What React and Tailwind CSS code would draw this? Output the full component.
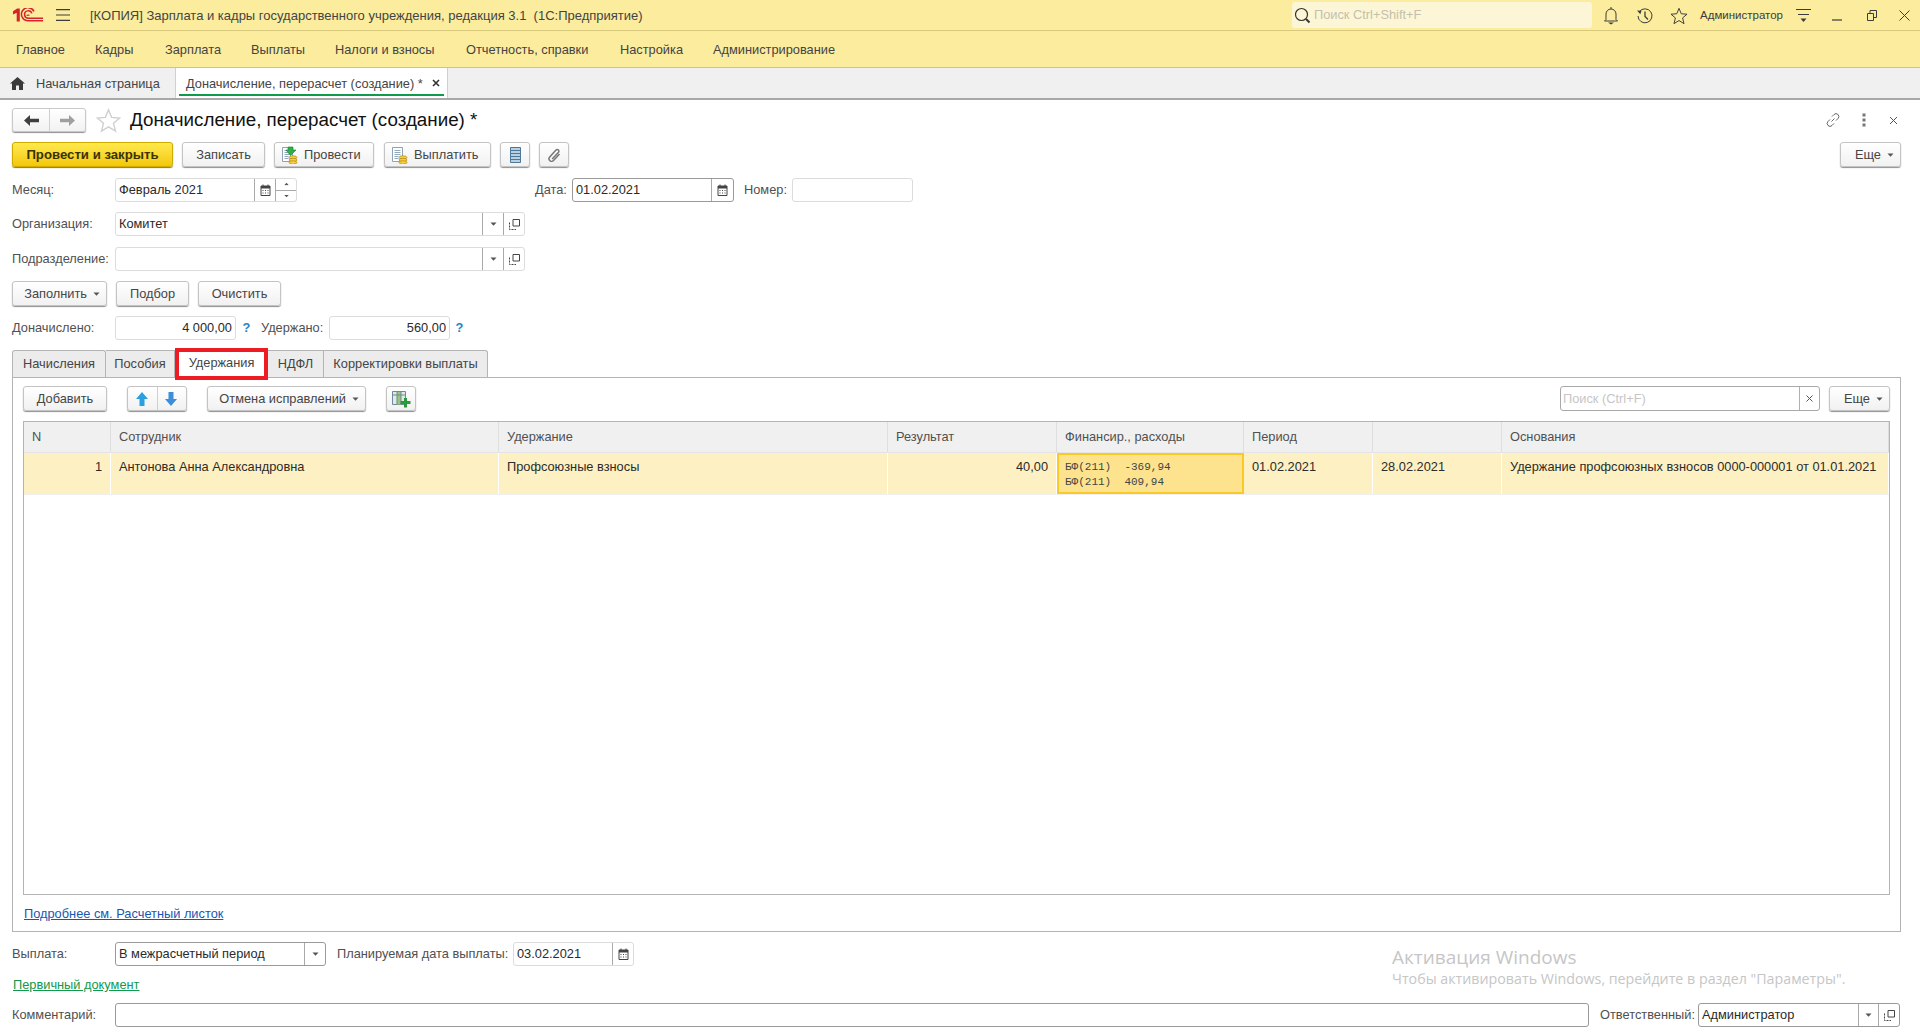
import React from "react";

const Caret = ({ className = "" }) => (
  <svg width="7" height="4" viewBox="0 0 7 4" className={className}><path d="M0.5 0.5h6L3.5 3.8z" fill="#555" /></svg>
);
const Calendar = () => (
  <svg width="11" height="12" viewBox="0 0 11 12">
    <path d="M1 2h9v9.500H1z" fill="none" stroke="#444" />
    <path d="M1 2h9v2.500H1z" fill="#444" />
    <path d="M3 .5v2M8 .5v2" stroke="#444" />
    <path d="M2.500 6h1v1h-1zM5 6h1v1H5zM7.500 6h1v1h-1zM2.500 8.500h1v1h-1zM5 8.500h1v1H5zM7.500 8.500h1v1h-1z" fill="#444" />
  </svg>
);
const OpenIcon = () => (
  <svg width="11" height="11" viewBox="0 0 11 11">
    <path d="M4 .5h6.500V7H4z" fill="none" stroke="#444" />
    <path d="M.5 3.500v7H7" fill="none" stroke="#444" strokeDasharray="2 1" />
  </svg>
);
const Star = ({ size, stroke }) => (
  <svg width={size} height={size} viewBox="0 0 24 24">
    <path d="M12 1.800l3 7.200 7.700.6-5.900 5 1.900 7.600L12 18.100l-6.700 4.100 1.900-7.600-5.900-5 7.700-.6z" fill="none" stroke={stroke} strokeWidth="1.300" />
  </svg>
);
const DocLines = () => (
  <>
    <path d="M1.500 1.500h10v14h-10z" fill="#fff" stroke="#8ea3b6" />
    <path d="M3.500 4.500h6M3.500 6.500h6M3.500 8.500h6M3.500 10.500h4M3.500 12.500h4" stroke="#93a8bb" />
  </>
);
const Coins = () => (
  <g>
    <ellipse cx="12" cy="11.500" rx="4" ry="1.700" fill="#f7cf45" stroke="#b08515" strokeWidth=".7" />
    <ellipse cx="12" cy="14" rx="4" ry="1.700" fill="#f7cf45" stroke="#b08515" strokeWidth=".7" />
    <ellipse cx="12" cy="16.500" rx="4" ry="1.700" fill="#f7cf45" stroke="#b08515" strokeWidth=".7" />
  </g>
);

const Btn = ({ w, children, className = "", primary, align = "justify-center" }) => (
  <div
    className={`h-[25px] pt-[1px] flex items-center shrink-0 rounded-[3px] border whitespace-nowrap ${align} ${
      primary
        ? "bg-linear-to-b from-[#ffe94a] to-[#f3c800] border-[#d0ab00] shadow-[0_1px_1px_#8a7a20] font-bold text-[13.200px] text-[#3a3300]"
        : "bg-linear-to-b from-white to-[#f1f1f1] border-[#c4c4c4] shadow-[0_1px_1px_#8f8f8f] text-[#454545]"
    } ${w} ${className}`}
  >
    {children}
  </div>
);

const Field = ({ w, dark, children, text, right, bg = "" }) => (
  <div className={`h-[24px] flex shrink-0 rounded-[3px] border bg-white ${dark ? "border-[#9a9a9a]" : "border-[#dcdcdc]"} ${w} ${bg}`}>
    <div className={`flex-1 min-w-0 px-[3px] leading-[22px] text-[#2a2a2a] whitespace-nowrap ${right ? "text-right" : ""}`}>{text}</div>
    {children}
  </div>
);
const Seg = ({ w, children }) => (
  <div className={`shrink-0 h-full border-l border-[#a9a9a9] flex items-center justify-center ${w}`}>{children}</div>
);

const Label = ({ w, children, className = "" }) => (
  <div className={`shrink-0 leading-[24px] text-[#505050] whitespace-nowrap ${w} ${className}`}>{children}</div>
);

const Head = ({ children }) => (
  <div className="h-[30px] bg-[#f0f0f0] border-r border-[#dedede] px-[8px] leading-[30px] text-[#505050] whitespace-nowrap">{children}</div>
);
const Cell = ({ children, right }) => (
  <div className={`h-[41px] bg-[#fdf1c3] border-r border-white px-[8px] pt-[6px] leading-[15px] text-[#2c2c2c] whitespace-nowrap ${right ? "text-right" : ""}`}>{children}</div>
);

const menu = [
  ["Главное", "w-[79px]"],
  ["Кадры", "w-[70px]"],
  ["Зарплата", "w-[86px]"],
  ["Выплаты", "w-[84px]"],
  ["Налоги и взносы", "w-[131px]"],
  ["Отчетность, справки", "w-[154px]"],
  ["Настройка", "w-[93px]"],
  ["Администрирование", "w-[140px]"],
];

export default function App() {
  return (
    <div className="relative w-[1920px] h-[1034px] overflow-hidden bg-white text-[12.800px] text-[#444] font-['Liberation_Sans',Arial,sans-serif]">
      {/* Title bar */}
      <div className="h-[31px] bg-[#fbec9e] border-b border-[#d9c97c] flex items-center">
        <svg width="30" height="14" viewBox="0 0 30 14" className="ml-[13px] shrink-0">
          <path d="M0 3.200L4.200.5h2.600V13.500H3.700V4.700L0 6.500z" fill="#d5232c" />
          <path d="M21 3.300A6.600 6.600 0 1 0 14.500 12.800H30" fill="none" stroke="#d5232c" strokeWidth="1.500" />
          <path d="M18.800 5.400A3.700 3.700 0 1 0 15 10.200H30" fill="none" stroke="#d5232c" strokeWidth="1.500" />
          <path d="M13.500 7.200h3" stroke="#d5232c" strokeWidth="1.200" />
        </svg>
        <svg width="14" height="12" viewBox="0 0 14 12" className="ml-[13px] shrink-0"><path d="M0 .7h14M0 6h14M0 11.300h14" stroke="#3c3c3c" strokeWidth="1.200" /></svg>
        <div className="ml-[20px] mt-[1px] whitespace-pre text-[13px] text-[#444] w-[1200px] shrink-0">[КОПИЯ] Зарплата и кадры государственного учреждения, редакция 3.1  (1С:Предприятие)</div>
        <div className="absolute left-[1292px] top-[2px] w-[300px] h-[26px] rounded-[3px] bg-[#fdf6d6] flex items-center">
          <svg width="17" height="17" viewBox="0 0 17 17" className="ml-[2px]"><circle cx="7.500" cy="7.500" r="6" fill="none" stroke="#333" strokeWidth="1.200" /><path d="M12 12l3.500 3.500" stroke="#333" strokeWidth="2" /></svg>
          <span className="ml-[3px] text-[#c4c0ac]">Поиск Ctrl+Shift+F</span>
        </div>
        <div className="absolute left-[1603px] top-[6px] flex items-center h-[19px]">
          <svg width="16" height="19" viewBox="0 0 16 19"><path d="M3 13.500V8a5 5 0 0 1 10 0v5.500l1.500 1.500h-13z" fill="none" stroke="#3c3c3c" /><path d="M8 1v2" stroke="#3c3c3c" /><path d="M5 16.500h6l-3 2z" fill="#3c3c3c" /></svg>
          <svg width="18" height="18" viewBox="0 0 18 18" className="ml-[17px]"><path d="M3.500 4.500A7 7 0 1 1 2 9" fill="none" stroke="#3c3c3c" /><path d="M1 3.500l4.500.2-1.200 3.600z" fill="#3c3c3c" /><path d="M9 4.500V9.500l3 3" fill="none" stroke="#3c3c3c" strokeWidth="1.300" /></svg>
          <span className="ml-[16px]"><Star size={18} stroke="#3c3c3c" /></span>
          <span className="ml-[3px] text-[11.500px] text-[#3c3c3c] whitespace-nowrap w-[92px] text-right">Администратор</span>
          <svg width="15" height="15" viewBox="0 0 15 15" className="ml-[13px]"><path d="M0 1.500h15M2 6.500h11" stroke="#3c3c3c" /><path d="M4.500 10.500h6l-3 3.500z" fill="#3c3c3c" /></svg>
          <svg width="10" height="10" viewBox="0 0 10 10" className="ml-[21px]"><path d="M0 9h10" stroke="#3c3c3c" strokeWidth="1.200" /></svg>
          <svg width="10" height="11" viewBox="0 0 10 11" className="ml-[25px]"><path d="M.5 3.500h6v7h-6z M3 3.500V.5h6.500v7H7" fill="none" stroke="#3c3c3c" /></svg>
          <svg width="11" height="11" viewBox="0 0 11 11" className="ml-[22px]"><path d="M.5.500l10 10M10.500.5l-10 10" stroke="#3c3c3c" /></svg>
        </div>
      </div>

      {/* Main menu */}
      <div className="h-[37px] bg-[#fbec9e] border-b border-[#d2c47e] flex items-center pl-[16px] pt-[1px] text-[#444]">
        {menu.map(([t, w]) => (
          <div key={t} className={`whitespace-nowrap shrink-0 ${w}`}>{t}</div>
        ))}
      </div>

      {/* Tabs */}
      <div className="h-[32px] bg-[#f0f0f0] border-b-2 border-[#a8a8a8] flex">
        <div className="w-[176px] flex items-center border-r border-[#d0d0d0]">
          <svg width="15" height="13" viewBox="0 0 15 13" className="ml-[10px]"><path d="M7.500 0L15 6.500h-2V13H9V8.500H6V13H2V6.500H0z" fill="#3a3a3a" /></svg>
          <span className="ml-[11px] mt-[1px] text-[#454545] whitespace-nowrap">Начальная страница</span>
        </div>
        <div className="relative w-[272px] bg-white border-r border-[#d0d0d0] flex items-center">
          <span className="ml-[10px] mt-[1px] text-[#454545] whitespace-nowrap">Доначисление, перерасчет (создание) *</span>
          <svg width="8" height="8" viewBox="0 0 8 8" className="ml-[9px]"><path d="M1 1l6 6M7 1L1 7" stroke="#333" strokeWidth="1.600" /></svg>
          <div className="absolute left-[3px] right-[3px] bottom-[2px] h-[2px] bg-[#0f9a4c]" />
        </div>
      </div>

      {/* Form */}
      <div className="pl-[12px] pr-[19px]">
        {/* Nav row */}
        <div className="mt-[8px] h-[24px] flex items-center">
          <div className="w-[74px] h-[24px] flex rounded-[3px] border border-[#c9c9c9] bg-linear-to-b from-white to-[#f2f2f2] shadow-[0_1px_1px_#8f8f8f]">
            <div className="w-[37px] border-r border-[#d0d0d0] flex items-center justify-center">
              <svg width="15" height="11" viewBox="0 0 15 11"><path d="M6 0L0 5.500 6 11V7.200h9V3.800H6z" fill="#3f3f3f" /></svg>
            </div>
            <div className="flex-1 flex items-center justify-center">
              <svg width="15" height="11" viewBox="0 0 15 11"><path d="M9 0l6 5.500L9 11V7.200H0V3.800h9z" fill="#9f9f9f" /></svg>
            </div>
          </div>
          <span className="ml-[10px]"><Star size={25} stroke="#cfcfcf" /></span>
          <div className="ml-[9px] mt-[1px] text-[18.800px] text-[#111] whitespace-nowrap">Доначисление, перерасчет (создание) *</div>
          <div className="ml-auto flex items-center">
            <svg width="16" height="16" viewBox="0 0 16 16"><path d="M6.500 9.500l3-3M7 4.500l2-2a2.800 2.800 0 0 1 4 4l-2 2M9 11.500l-2 2a2.800 2.800 0 0 1-4-4l2-2" fill="none" stroke="#666" /></svg>
            <svg width="4" height="14" viewBox="0 0 4 14" className="ml-[21px]"><path d="M.5.500h3v3h-3zM.5 5.500h3v3h-3zM.5 10.500h3v3h-3z" fill="#777" /></svg>
            <svg width="9" height="9" viewBox="0 0 9 9" className="ml-[23px] mr-[3px]"><path d="M1 1l7 7M8 1L1 8" stroke="#555" /></svg>
          </div>
        </div>

        {/* Toolbar */}
        <div className="mt-[10px] flex items-center">
          <Btn primary w="w-[161px]">Провести и закрыть</Btn>
          <Btn w="w-[83px] ml-[9px]">Записать</Btn>
          <Btn align="justify-start" w="w-[100px] ml-[9px] pl-[6px]">
            <svg width="18" height="18" viewBox="0 0 18 18" className="mr-[5px]"><DocLines /><Coins /><path d="M7 1h5v3h3l-5.500 5.500L5 4h2z" fill="#2fae4a" stroke="#1a7d33" strokeWidth=".6" /></svg>
            Провести
          </Btn>
          <Btn align="justify-start" w="w-[107px] ml-[10px] pl-[6px]">
            <svg width="18" height="18" viewBox="0 0 18 18" className="mr-[5px]"><DocLines /><Coins /></svg>
            Выплатить
          </Btn>
          <Btn w="w-[30px] ml-[9px]">
            <svg width="11" height="16" viewBox="0 0 11 16"><path d="M.5.500h10v15H.5z" fill="#b9cfe0" stroke="#4d7899" /><path d="M.5 3.500h10M.5 6.500h10M.5 9.500h10M.5 12.500h10" stroke="#4d7899" /></svg>
          </Btn>
          <Btn w="w-[30px] ml-[9px]">
            <svg width="14" height="15" viewBox="0 0 14 15"><path d="M12.500 6L6.500 12.500a2.500 2.500 0 0 1-3.800-3.400l6.300-7a1.600 1.600 0 0 1 2.500 2.100L5.200 11" fill="none" stroke="#777" strokeWidth="1.500" /></svg>
          </Btn>
          <Btn align="justify-end" w="w-[61px] ml-auto pr-[6px]">Еще<Caret className="ml-[6px]" /></Btn>
        </div>

        {/* Month/date row */}
        <div className="mt-[11px] flex">
          <Label w="w-[103px]">Месяц:</Label>
          <Field w="w-[182px]" text="Февраль 2021">
            <Seg w="w-[21px]"><Calendar /></Seg>
            <div className="w-[21px] shrink-0 border-l border-[#a9a9a9] flex flex-col">
              <div className="flex-1 flex items-center justify-center border-b border-[#a9a9a9]"><Caret className="rotate-180 scale-75" /></div>
              <div className="flex-1 flex items-center justify-center"><Caret className="scale-75" /></div>
            </div>
          </Field>
          <Label w="w-[37px] ml-[238px]">Дата:</Label>
          <Field dark w="w-[162px]" text="01.02.2021">
            <Seg w="w-[22px]"><Calendar /></Seg>
          </Field>
          <Label w="w-[48px] ml-[10px]">Номер:</Label>
          <Field w="w-[121px]" text="" />
        </div>

        <div className="mt-[10px] flex">
          <Label w="w-[103px]">Организация:</Label>
          <Field w="w-[410px]" text="Комитет">
            <Seg w="w-[21px]"><Caret /></Seg>
            <Seg w="w-[21px]"><OpenIcon /></Seg>
          </Field>
        </div>

        <div className="mt-[11px] flex">
          <Label w="w-[103px]">Подразделение:</Label>
          <Field w="w-[410px]" text="">
            <Seg w="w-[21px]"><Caret /></Seg>
            <Seg w="w-[21px]"><OpenIcon /></Seg>
          </Field>
        </div>

        <div className="mt-[10px] flex">
          <Btn align="justify-end" w="w-[95px] pr-[6px]">Заполнить<Caret className="ml-[6px]" /></Btn>
          <Btn w="w-[73px] ml-[9px]">Подбор</Btn>
          <Btn w="w-[83px] ml-[9px]">Очистить</Btn>
        </div>

        <div className="mt-[10px] flex">
          <Label w="w-[103px]">Доначислено:</Label>
          <Field right w="w-[121px]" text="4 000,00" />
          <div className="w-[21px] text-center leading-[24px] font-bold text-[#2484c6]">?</div>
          <Label w="w-[68px] ml-[4px]">Удержано:</Label>
          <Field right w="w-[121px]" text="560,00" />
          <div className="w-[19px] text-center leading-[24px] font-bold text-[#2484c6]">?</div>
        </div>

        {/* Page tabs */}
        <div className="mt-[10px] h-[27px] flex text-[#454545]">
          <div className="w-[94px] bg-[#ececec] border border-b-0 border-[#b4b4b4] rounded-t-[3px] text-center leading-[26px]">Начисления</div>
          <div className="w-[69px] bg-[#ececec] border-t border-r border-[#b4b4b4] text-center leading-[26px]">Пособия</div>
          <div className="relative w-[93px] h-[28px] bg-white z-10 text-center leading-[26px]">
            Удержания
            <div className="absolute left-0 right-0 top-[-2px] bottom-[-2px] border-[4px] border-[#ed1c24]" />
          </div>
          <div className="w-[55px] bg-[#ececec] border-t border-[#b4b4b4] text-center leading-[26px]">НДФЛ</div>
          <div className="w-[165px] bg-[#ececec] border-t border-x border-[#b4b4b4] rounded-tr-[3px] text-center leading-[26px]">Корректировки выплаты</div>
        </div>

        {/* Panel */}
        <div className="h-[555px] w-[1889px] border border-[#b4b4b4] px-[10px] pt-[8px]">
          <div className="flex items-center">
            <Btn w="w-[84px]">Добавить</Btn>
            <div className="ml-[20px] w-[60px] h-[25px] flex rounded-[3px] border border-[#c4c4c4] bg-linear-to-b from-white to-[#f1f1f1] shadow-[0_1px_1px_#8f8f8f]">
              <div className="w-[30px] pr-[2px] border-r border-[#d0d0d0] flex items-center justify-center">
                <svg width="12" height="14" viewBox="0 0 12 14"><path d="M6 0l6 7H8.500v7h-5V7H0z" fill="#2b9fe0" /></svg>
              </div>
              <div className="flex-1 pr-[2px] flex items-center justify-center">
                <svg width="12" height="14" viewBox="0 0 12 14"><path d="M6 14L0 7h3.500V0h5v7H12z" fill="#3a8fd8" /></svg>
              </div>
            </div>
            <Btn align="justify-end" w="w-[159px] ml-[20px] pr-[6px]">Отмена исправлений<Caret className="ml-[6px]" /></Btn>
            <Btn w="w-[30px] ml-[20px]">
              <svg width="19" height="17" viewBox="0 0 19 17"><path d="M.5.500h13v13H.5z" fill="#dfe9e6" stroke="#6f8a98" /><path d="M5 1h4v12.500H5z" fill="#9cc47a" /><path d="M.5 4h13M5 .5v13M9 .5v13" stroke="#6f8a98" /><path d="M12 7h3v3h3.500v3H15v3.500h-3V13H8.500v-3H12z" fill="#2b9a3c" /></svg>
            </Btn>
            <div className="ml-auto flex">
              <div className="w-[260px] h-[25px] rounded-[3px] border border-[#a9a9a9] bg-white flex">
                <div className="flex-1 px-[2px] leading-[23px] text-[#c6c6c6] whitespace-nowrap">Поиск (Ctrl+F)</div>
                <div className="w-[20px] border-l border-[#b0b0b0] flex items-center justify-center">
                  <svg width="7" height="7" viewBox="0 0 7 7"><path d="M.5.500l6 6M6.500.500l-6 6" stroke="#555" /></svg>
                </div>
              </div>
              <Btn align="justify-end" w="w-[61px] ml-[9px] pr-[6px]">Еще<Caret className="ml-[6px]" /></Btn>
            </div>
          </div>

          {/* Table */}
          <div className="mt-[10px] w-[1867px] h-[474px] border border-[#b4b4b4]">
            <div className="grid grid-cols-[87px_388px_389px_169px_187px_129px_129px_1fr] border-b border-[#e4e4e4]">
              <Head>N</Head>
              <Head>Сотрудник</Head>
              <Head>Удержание</Head>
              <Head>Результат</Head>
              <Head>Финансир., расходы</Head>
              <Head>Период</Head>
              <Head />
              <Head>Основания</Head>
            </div>
            <div className="grid grid-cols-[87px_388px_389px_169px_187px_129px_129px_1fr] border-b border-[#f0f0f0]">
              <Cell right>1</Cell>
              <Cell>Антонова Анна Александровна</Cell>
              <Cell>Профсоюзные взносы</Cell>
              <Cell right>40,00</Cell>
              <div className="h-[41px] bg-[#fde38e] border-2 border-[#fbc926] pl-[6px] pt-[5px] text-[11px] leading-[15px] text-[#444] font-['Liberation_Mono',monospace] whitespace-pre">
                <div>БФ(211)  -369,94</div>
                <div>БФ(211)  409,94</div>
              </div>
              <Cell>01.02.2021</Cell>
              <Cell>28.02.2021</Cell>
              <Cell>Удержание профсоюзных взносов 0000-000001 от 01.01.2021</Cell>
            </div>
          </div>

          <div className="mt-[11px] ml-[1px] leading-[15px] text-[#1a56b0] underline whitespace-nowrap">Подробнее см. Расчетный листок</div>
        </div>

        {/* Footer */}
        <div className="mt-[10px] flex">
          <Label w="w-[103px]">Выплата:</Label>
          <Field dark w="w-[211px]" text="В межрасчетный период">
            <Seg w="w-[21px]"><Caret /></Seg>
          </Field>
          <Label w="w-[176px] ml-[11px]">Планируемая дата выплаты:</Label>
          <Field w="w-[121px]" text="03.02.2021">
            <Seg w="w-[21px]"><Calendar /></Seg>
          </Field>
        </div>
        <div className="mt-[11px] ml-[1px] leading-[15px] text-[#0f9a4c] underline whitespace-nowrap">Первичный документ</div>
        <div className="mt-[11px] flex">
          <Label w="w-[103px]">Комментарий:</Label>
          <Field dark w="w-[1474px]" text="" />
          <Label w="w-[98px] ml-[11px]">Ответственный:</Label>
          <Field dark w="w-[202px]" text="Администратор">
            <Seg w="w-[20px]"><Caret /></Seg>
            <Seg w="w-[21px]"><OpenIcon /></Seg>
          </Field>
        </div>
      </div>

      {/* Windows watermark */}
      <div className="absolute left-[1392px] top-[945px] text-[#c6c6c6] font-['Open_Sans',sans-serif] pointer-events-none">
        <div className="text-[19px] leading-[24px]">Активация Windows</div>
        <div className="text-[14.250px] leading-[20px] mt-[0px] whitespace-nowrap">Чтобы активировать Windows, перейдите в раздел "Параметры".</div>
      </div>
    </div>
  );
}
